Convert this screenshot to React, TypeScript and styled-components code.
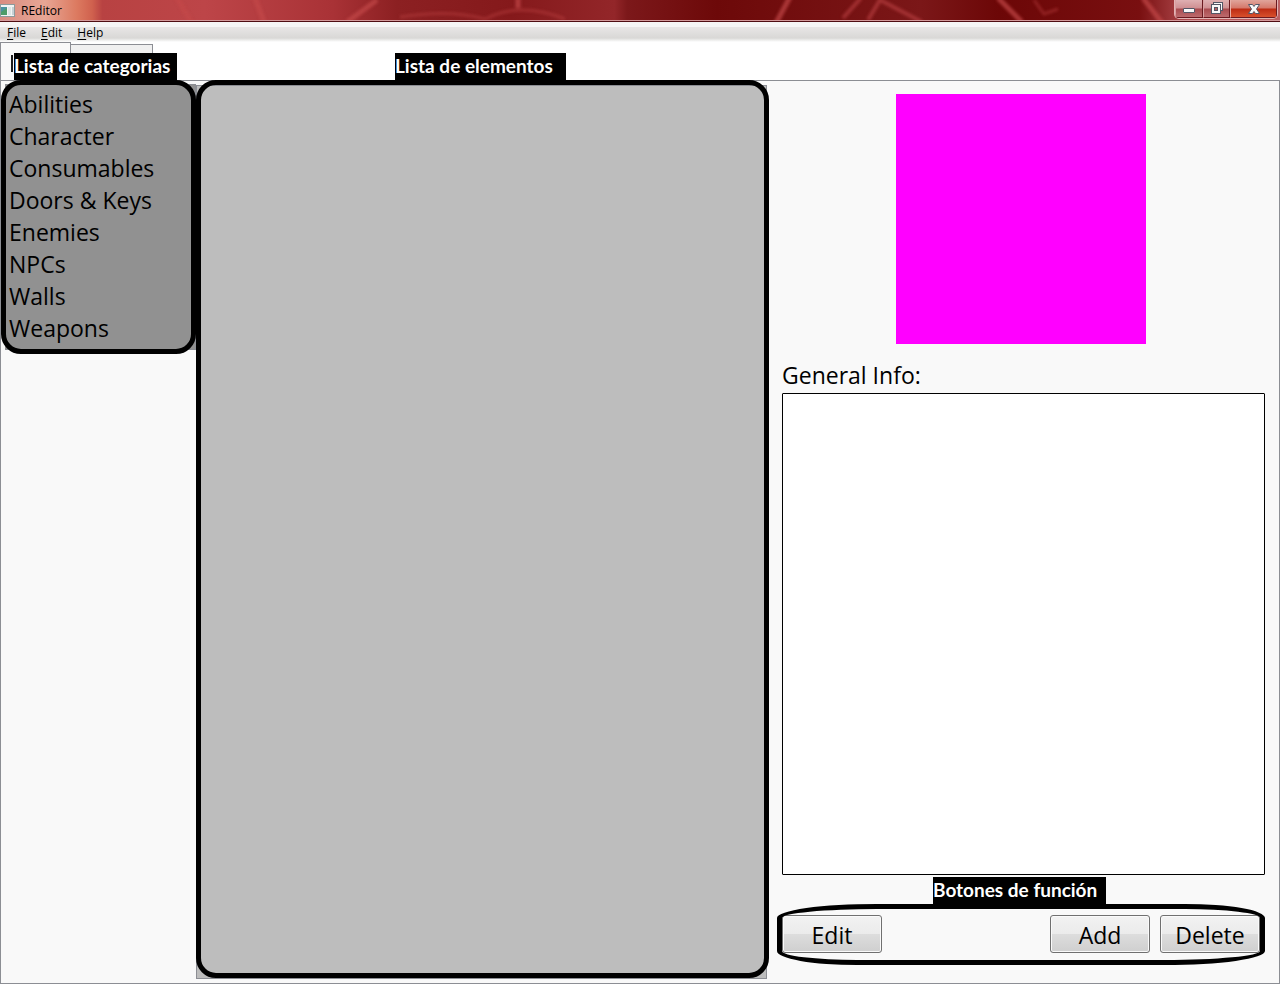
import React from "react";
import styled, { createGlobalStyle } from "styled-components";

const GlobalStyle = createGlobalStyle`
  * { box-sizing: border-box; }
  body {
    margin: 0;
    background: #ffffff;
    color: #000000;
    font-family: "Open Sans", "Noto Sans", sans-serif;
  }
  button { font-family: inherit; color: inherit; margin: 0; }
`;

const Window = styled.div`
  display: flex;
  flex-direction: column;
  min-height: 100vh;
`;

const TitleBar = styled.header`
  position: relative;
  display: flex;
  justify-content: space-between;
  align-items: flex-start;
  height: 22px;
  overflow: hidden;
  background: #7b1517;
  border-bottom: 1px solid #4f0d12;
  box-shadow: inset 0 -1px 0 #d39a9c;
`;

const Glass = styled.svg`
  position: absolute;
  top: 0;
  left: 0;
  width: 100%;
  height: 20px;
`;

const TitleText = styled.h1`
  position: relative;
  display: flex;
  align-items: center;
  gap: 6px;
  height: 21px;
  margin: 0;
  font-size: 12px;
  font-weight: 400;
`;

const WindowButtons = styled.div`
  position: relative;
  display: flex;
  height: 19px;
  margin-right: 2px;
  border: 1px solid #e3b4b4;
  border-top: 0;
  border-radius: 0 0 5px 5px;
  overflow: hidden;
`;

const WindowButton = styled.button<{ $width: number; $close?: boolean }>`
  display: flex;
  align-items: center;
  justify-content: center;
  width: ${(p) => p.$width}px;
  height: 18px;
  padding: 0;
  border: 1px solid #6a1a20;
  border-top: 0;
  border-left: 1px solid ${(p) => (p.$close ? "#e8b0a8" : "#d9a0a2")};
  background: ${(p) =>
    p.$close
      ? "linear-gradient(#e0a49b 0, #d5786a 8px, #bd2c14 9px, #d8502c 100%)"
      : "linear-gradient(#dfb0b2 0, #cf8f92 8px, #a94b4f 9px, #bd6a6d 100%)"};
`;

const MenuBar = styled.nav`
  display: flex;
  height: 20px;
  padding-left: 2px;
  background: linear-gradient(#f5f5f5 0, #f5f5f5 5px, #e8e6e6 5px, #d9d8d6 16px, #ffffff 20px);
`;

const MenuItem = styled.button`
  height: 20px;
  padding: 0 5px;
  margin-right: 5px;
  border: 0;
  background: none;
  font-size: 12px;
  line-height: 22px;
  u { text-underline-offset: 2px; }
`;

const TabStrip = styled.div`
  display: flex;
  align-items: flex-end;
  height: 38px;
`;

const Tab = styled.button<{ $width: number; $active?: boolean }>`
  width: ${(p) => p.$width}px;
  height: ${(p) => (p.$active ? 38 : 36)}px;
  padding: 0 10px;
  border: 1px solid #8c8e94;
  border-bottom: 0;
  border-left-width: ${(p) => (p.$active ? 1 : 0)}px;
  background: ${(p) => (p.$active ? "#f9f9f9" : "#f0f0f0")};
`;

const TabMark = styled.span`
  display: block;
  width: 2px;
  height: 17px;
  margin-top: 4px;
  background: #1c1c1c;
`;

const Body = styled.main`
  flex: 1;
  display: grid;
  grid-template-columns: 195px minmax(0, 573fr) minmax(0, 510fr);
  border: 1px solid #8c8e94;
  background: #f9f9f9;
`;

const Pane = styled.section`
  position: relative;
  display: flex;
  flex-direction: column;
  align-self: start;
  margin-top: -1px;
  padding: 4px 0 4px 4px;
`;

const ElementsPane = styled(Pane)`
  align-self: stretch;
  margin-bottom: 4px;
  padding: 5px 2px 0 0;
`;

const Frame = styled.div`
  position: absolute;
  inset: 0;
  border: 5px solid #000000;
  border-radius: 20px;
  pointer-events: none;
`;

const ElementsFrame = styled(Frame)`
  bottom: 1px;
`;

const Callout = styled.h2<{ $left: number; $width: number }>`
  position: absolute;
  bottom: 100%;
  left: ${(p) => p.$left}px;
  width: ${(p) => p.$width}px;
  height: 27px;
  margin: 0;
  background: #000000;
  color: #ffffff;
  font-family: Lato, sans-serif;
  font-size: 19px;
  font-weight: 700;
  line-height: 26px;
  white-space: nowrap;
`;

const CategoryList = styled.ul`
  margin: 0;
  padding: 3px 4px 5px;
  list-style: none;
  background: #919191;
  border: 1px solid #8c8e94;
  border-left: 0;
`;

const Category = styled.button`
  display: block;
  width: 100%;
  height: 32px;
  padding: 0;
  border: 0;
  background: none;
  font-size: 23px;
  line-height: 32px;
  text-align: left;
`;

const ElementList = styled.div`
  flex: 1;
  background: #bdbdbd;
  border: 1px solid #8c8e94;
`;

const Details = styled.section`
  display: flex;
  flex-direction: column;
  padding: 13px 14px 18px 13px;
`;

const Preview = styled.div`
  align-self: center;
  width: 250px;
  height: 250px;
  margin-right: 6px;
  background: #ff00ff;
`;

const InfoLabel = styled.label`
  margin-top: 15px;
  font-size: 23px;
  line-height: 32px;
`;

const InfoBox = styled.textarea`
  flex: 1;
  width: 100%;
  margin: 2px 0 29px;
  border: 1px solid #000000;
  border-radius: 1px;
  background: #ffffff;
  resize: none;
  font: inherit;
`;

const Actions = styled.div`
  position: relative;
  display: flex;
  gap: 10px;
  margin-left: -5px;
  padding: 11px 5px 12px;
`;

const ActionsFrame = styled(Frame)`
  border-radius: 100px 80px / 14px 14px;
`;

const ActionButton = styled.button`
  width: 100px;
  height: 38px;
  padding: 0;
  border: 1px solid #707070;
  border-radius: 3px;
  background: linear-gradient(#f2f2f2 0, #ebebeb 50%, #dddddd 50%, #cfcfcf 100%);
  box-shadow: inset 0 0 0 1px #fafafa;
  font-size: 23px;
  line-height: 38px;
  &:first-of-type { margin-right: auto; }
`;

const categories = [
  "Abilities",
  "Character",
  "Consumables",
  "Doors & Keys",
  "Enemies",
  "NPCs",
  "Walls",
  "Weapons",
];

function TitleGlass() {
  return (
    <Glass viewBox="0 0 1280 20" preserveAspectRatio="none" aria-hidden="true">
      <defs>
        <linearGradient id="glass">
          <stop offset="0" stopColor="#d88c80" />
          <stop offset="0.035" stopColor="#e7a695" />
          <stop offset="0.06" stopColor="#dc7a60" />
          <stop offset="0.072" stopColor="#d0614e" />
          <stop offset="0.08" stopColor="#b84242" />
          <stop offset="0.16" stopColor="#bd4548" />
          <stop offset="0.26" stopColor="#a93236" />
          <stop offset="0.31" stopColor="#8c2022" />
          <stop offset="0.4" stopColor="#85191b" />
          <stop offset="0.48" stopColor="#932629" />
          <stop offset="0.49" stopColor="#7c181a" />
          <stop offset="0.56" stopColor="#6d0909" />
          <stop offset="0.72" stopColor="#7b1718" />
          <stop offset="0.78" stopColor="#6c0707" />
          <stop offset="0.89" stopColor="#790f10" />
          <stop offset="0.93" stopColor="#b24c50" />
          <stop offset="1" stopColor="#bc6264" />
        </linearGradient>
        <filter id="soft" x="-5%" y="-50%" width="110%" height="200%">
          <feGaussianBlur stdDeviation="1.5" />
        </filter>
      </defs>
      <rect width="1280" height="20" fill="url(#glass)" />
      <g fill="none" stroke="#c4484a" strokeWidth="5" opacity="0.7" filter="url(#soft)">
        <path d="M177 -2l14 24M255 -2l9 24M347 22l30 -22M518 -2v10" />
        <path d="M400 17q50 -8 85 2q35 -18 80 0" strokeWidth="3" opacity="0.6" />
        <path d="M790 -3l-14 26M998 -2l24 24M1143 -2l20 26" />
        <path d="M843 18l18 -20M868 20l12 -20l42 22" strokeWidth="4" opacity="0.8" />
        <path d="M1034 0l10 14l14 -5" strokeWidth="3" opacity="0.6" />
      </g>
    </Glass>
  );
}

function AppIcon() {
  return (
    <svg width="15" height="13" viewBox="0 0 15 13" aria-hidden="true">
      <rect x="0" y="0" width="15" height="13" fill="#8d9a9c" />
      <rect x="1" y="1" width="13" height="11" fill="#f1f4f3" />
      <rect x="1" y="3" width="6" height="8" fill="#4a93a0" />
      <path d="M1 11V8l6 -4v7z" fill="#4d9c68" />
      <rect x="8" y="3" width="3" height="8" fill="#dce4e4" />
      <rect x="12" y="3" width="2" height="8" fill="#c5d0d4" />
    </svg>
  );
}

function MinimizeGlyph() {
  return (
    <svg width="12" height="16" viewBox="0 0 12 16" aria-hidden="true">
      <rect x="0.5" y="7.5" width="11" height="4" rx="0.5" fill="#f8f8f8" stroke="#535666" />
    </svg>
  );
}

function RestoreGlyph() {
  return (
    <svg width="12" height="16" viewBox="0 0 12 16" aria-hidden="true">
      <rect x="2.5" y="1.5" width="9" height="8" fill="#f8f8f8" stroke="#535666" />
      <rect x="0.5" y="3.5" width="9" height="9" fill="#f8f8f8" stroke="#535666" />
      <rect x="3.5" y="6.5" width="3" height="3" fill="#b35f63" stroke="#535666" />
    </svg>
  );
}

function CloseGlyph() {
  return (
    <svg width="12" height="16" viewBox="0 0 12 16" aria-hidden="true">
      <path
        d="M0.5 3.5h4l1.5 2l1.5 -2h4l-3 4.500l3 4.500h-4l-1.500 -2l-1.500 2h-4l3 -4.500z"
        fill="#f8f8f8"
        stroke="#535666"
        strokeLinejoin="round"
      />
    </svg>
  );
}

export default function App() {
  return (
    <>
      <GlobalStyle />
      <Window>
        <TitleBar>
          <TitleGlass />
          <TitleText>
            <AppIcon />
            REditor
          </TitleText>
          <WindowButtons>
            <WindowButton $width={28}><MinimizeGlyph /></WindowButton>
            <WindowButton $width={27}><RestoreGlyph /></WindowButton>
            <WindowButton $width={47} $close><CloseGlyph /></WindowButton>
          </WindowButtons>
        </TitleBar>
        <MenuBar>
          <MenuItem><u>F</u>ile</MenuItem>
          <MenuItem><u>E</u>dit</MenuItem>
          <MenuItem><u>H</u>elp</MenuItem>
        </MenuBar>
        <TabStrip>
          <Tab $width={71} $active><TabMark /></Tab>
          <Tab $width={82} />
        </TabStrip>
        <Body>
          <Pane>
            <CategoryList>
              {categories.map((name) => (
                <li key={name}>
                  <Category>{name}</Category>
                </li>
              ))}
            </CategoryList>
            <Frame />
            <Callout $left={13} $width={163}>Lista de categorias</Callout>
          </Pane>
          <ElementsPane>
            <ElementList />
            <ElementsFrame />
            <Callout $left={199} $width={171}>Lista de elementos</Callout>
          </ElementsPane>
          <Details>
            <Preview />
            <InfoLabel htmlFor="general-info">General Info:</InfoLabel>
            <InfoBox id="general-info" />
            <Actions>
              <ActionButton>Edit</ActionButton>
              <ActionButton>Add</ActionButton>
              <ActionButton>Delete</ActionButton>
              <ActionsFrame />
              <Callout $left={156} $width={173}>Botones de función</Callout>
            </Actions>
          </Details>
        </Body>
      </Window>
    </>
  );
}
